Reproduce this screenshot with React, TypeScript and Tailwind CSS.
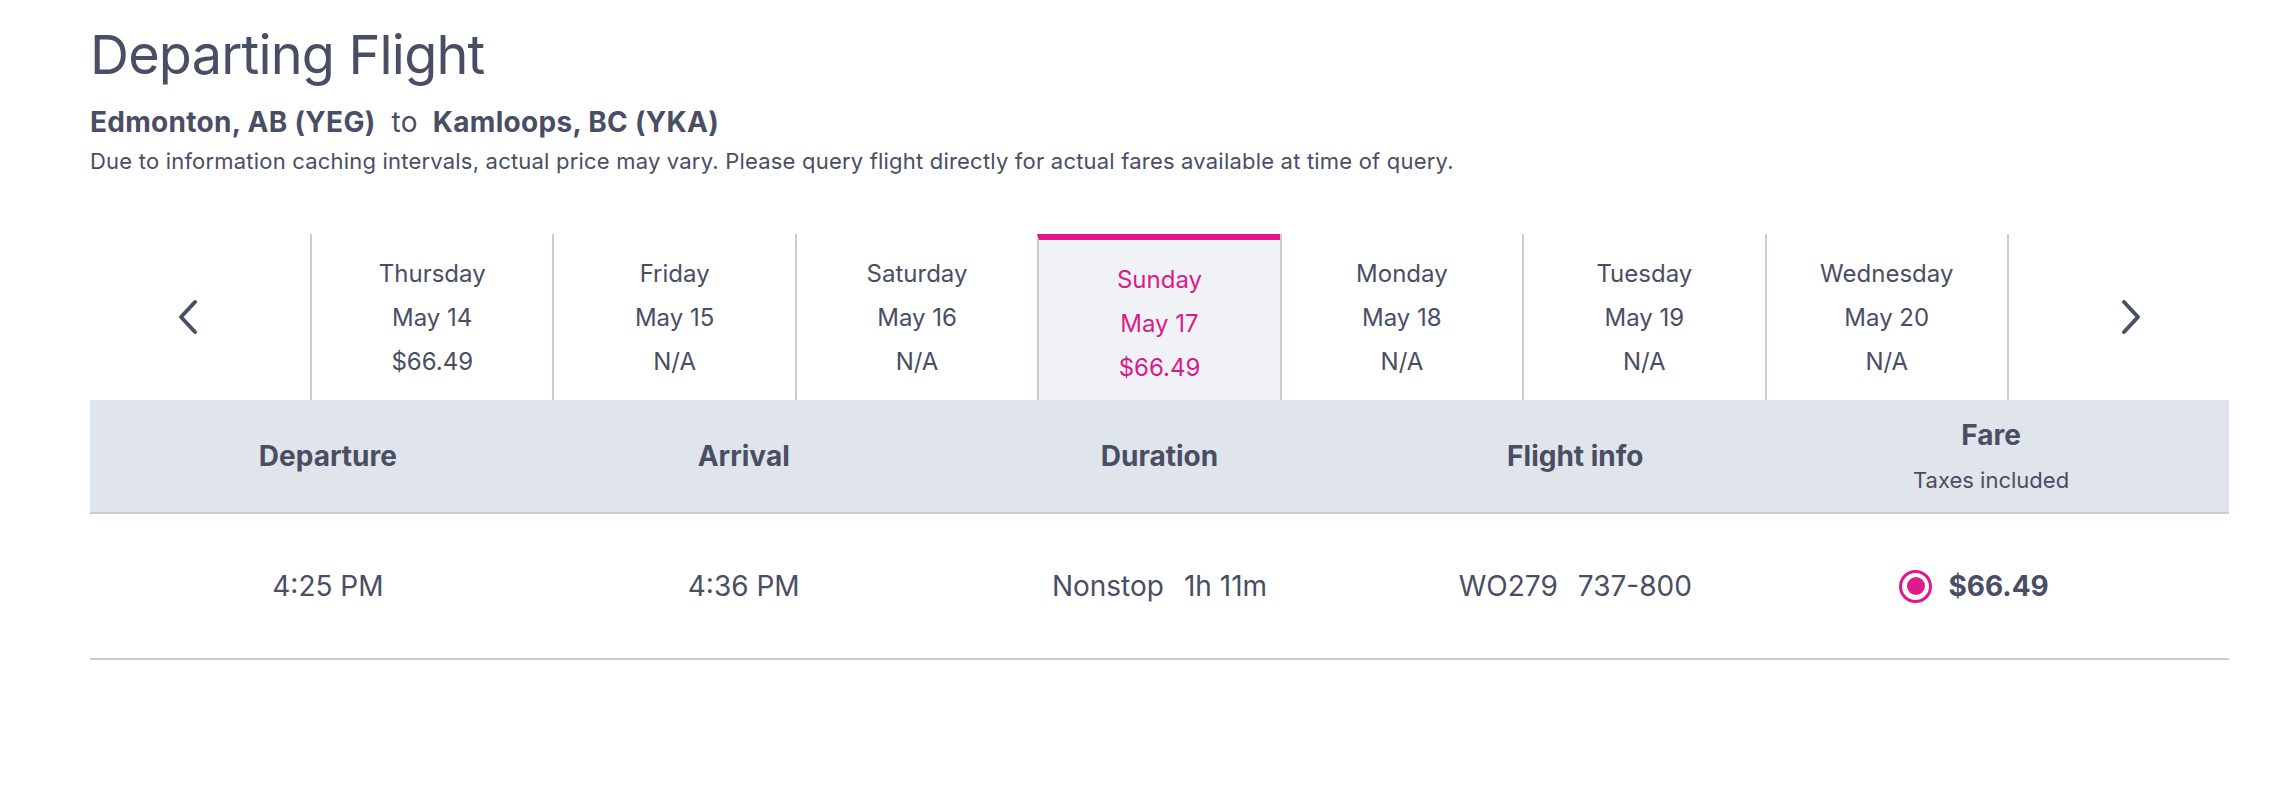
import React from "react";

const days = [
  { day: "Thursday", date: "May 14", price: "$66.49" },
  { day: "Friday", date: "May 15", price: "N/A" },
  { day: "Saturday", date: "May 16", price: "N/A" },
  { day: "Sunday", date: "May 17", price: "$66.49", active: true },
  { day: "Monday", date: "May 18", price: "N/A" },
  { day: "Tuesday", date: "May 19", price: "N/A" },
  { day: "Wednesday", date: "May 20", price: "N/A" },
];

function Chevron({ dir }: { dir: "left" | "right" }) {
  return (
    <svg width="24" height="38" viewBox="0 0 24 38" fill="none">
      <path
        d={dir === "left" ? "M19 4 L5 19 L19 34" : "M5 4 L19 19 L5 34"}
        stroke="#4a4f65"
        strokeWidth="4"
        strokeLinecap="round"
        strokeLinejoin="round"
      />
    </svg>
  );
}

export default function App() {
  return (
    <div
      className="min-h-[800px] bg-white pt-[28px] pl-[90px] text-[#494e64]"
      style={{ fontFamily: "Inter, 'Noto Sans', sans-serif" }}
    >
      <h1 className="text-[54px] leading-[54px] font-normal tracking-[-0.8px]">Departing Flight</h1>
      <p className="mt-[26px] text-[28px] leading-[28px] tracking-[0.3px]">
        <span className="font-bold">Edmonton, AB (YEG)</span>
        <span className="ml-[16px] mr-[15px]">to</span>
        <span className="font-bold">Kamloops, BC (YKA)</span>
      </p>
      <p className="mt-[14px] text-[22px] leading-[22px] tracking-[0.2px]">
        Due to information caching intervals, actual price may vary. Please query flight directly for actual fares available at time of query.
      </p>

      <div className="w-[2139px] mt-[62px]">
        {/* date carousel */}
        <div className="flex h-[166px]">
          <div className="w-[220px] flex items-center pl-[86px]">
            <Chevron dir="left" />
          </div>
          {days.map((d, i) => (
            <div
              key={d.day}
              className={
                "flex-1 flex flex-col items-center pt-[18px] text-[24px] leading-[44px] border-l-2 border-[#c9cdd6] " +
                (i === days.length - 1 ? "border-r-2 " : "") +
                (d.active ? "bg-[#f1f2f6] border-t-[6px] border-t-[#e0168d] text-[#d81b8b]" : "")
              }
            >
              <div>{d.day}</div>
              <div>{d.date}</div>
              <div>{d.price}</div>
            </div>
          ))}
          <div className="w-[220px] flex items-center justify-end pr-[86px]">
            <Chevron dir="right" />
          </div>
        </div>

        {/* table header */}
        <div className="grid grid-cols-5 px-[30px] h-[114px] bg-[#e0e4eb] border-b-2 border-[#c9cdd6] items-center text-center">
          <div className="text-[28px] font-bold">Departure</div>
          <div className="text-[28px] font-bold">Arrival</div>
          <div className="text-[28px] font-bold">Duration</div>
          <div className="text-[28px] font-bold">Flight info</div>
          <div className="flex flex-col items-center">
            <div className="text-[28px] leading-[34px] font-bold">Fare</div>
            <div className="mt-[13px] text-[22px] leading-[30px]">Taxes included</div>
          </div>
        </div>

        {/* flight row */}
        <div className="grid grid-cols-5 px-[30px] h-[146px] border-b-2 border-[#c9cdd6] items-center text-center text-[28px]">
          <div>4:25 PM</div>
          <div>4:36 PM</div>
          <div className="flex justify-center gap-[20px]">
            <span>Nonstop</span>
            <span>1h 11m</span>
          </div>
          <div className="flex justify-center gap-[20px]">
            <span>WO279</span>
            <span>737-800</span>
          </div>
          <div className="flex justify-center items-center gap-[16px] pr-[34px]">
            <span className="w-[33px] h-[33px] rounded-full border-[3px] border-[#e0168d] flex items-center justify-center">
              <span className="w-[18px] h-[18px] rounded-full bg-[#de1b8c]" />
            </span>
            <span className="font-bold">$66.49</span>
          </div>
        </div>
      </div>
    </div>
  );
}
